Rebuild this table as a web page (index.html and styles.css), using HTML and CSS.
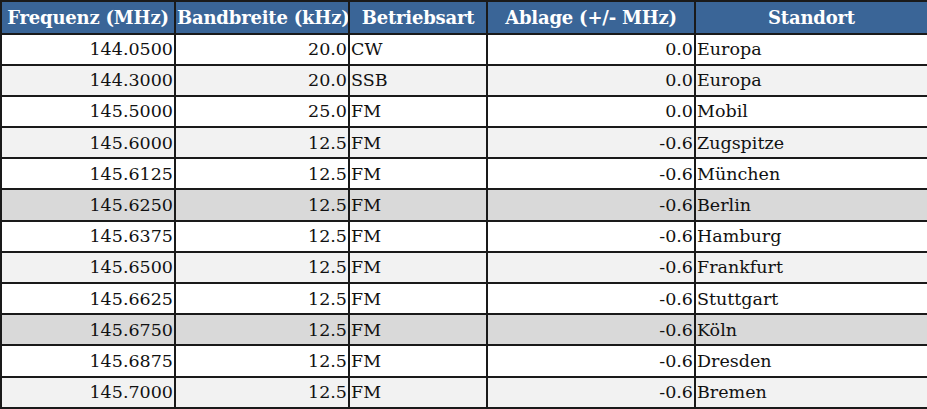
FILE: index.html
```html
<!DOCTYPE html>
<html lang="de">
<head>
<meta charset="utf-8">
<title>Frequenzen</title>
<link rel="stylesheet" href="styles.css">
</head>
<body>
<table class="freq">
<colgroup>
<col class="c1"><col class="c2"><col class="c3"><col class="c4"><col class="c5">
</colgroup>
<thead>
<tr><th>Frequenz (MHz)</th><th>Bandbreite (kHz)</th><th>Betriebsart</th><th>Ablage (+/- MHz)</th><th>Standort</th></tr>
</thead>
<tbody>
<tr class="w"><td class="num">144.0500</td><td class="num">20.0</td><td>CW</td><td class="num">0.0</td><td>Europa</td></tr>
<tr class="l"><td class="num">144.3000</td><td class="num">20.0</td><td>SSB</td><td class="num">0.0</td><td>Europa</td></tr>
<tr class="w"><td class="num">145.5000</td><td class="num">25.0</td><td>FM</td><td class="num">0.0</td><td>Mobil</td></tr>
<tr class="l"><td class="num">145.6000</td><td class="num">12.5</td><td>FM</td><td class="num">-0.6</td><td>Zugspitze</td></tr>
<tr class="w"><td class="num">145.6125</td><td class="num">12.5</td><td>FM</td><td class="num">-0.6</td><td>München</td></tr>
<tr class="d"><td class="num">145.6250</td><td class="num">12.5</td><td>FM</td><td class="num">-0.6</td><td>Berlin</td></tr>
<tr class="w"><td class="num">145.6375</td><td class="num">12.5</td><td>FM</td><td class="num">-0.6</td><td>Hamburg</td></tr>
<tr class="l"><td class="num">145.6500</td><td class="num">12.5</td><td>FM</td><td class="num">-0.6</td><td>Frankfurt</td></tr>
<tr class="w"><td class="num">145.6625</td><td class="num">12.5</td><td>FM</td><td class="num">-0.6</td><td>Stuttgart</td></tr>
<tr class="d"><td class="num">145.6750</td><td class="num">12.5</td><td>FM</td><td class="num">-0.6</td><td>Köln</td></tr>
<tr class="w"><td class="num">145.6875</td><td class="num">12.5</td><td>FM</td><td class="num">-0.6</td><td>Dresden</td></tr>
<tr class="l"><td class="num">145.7000</td><td class="num">12.5</td><td>FM</td><td class="num">-0.6</td><td>Bremen</td></tr>
</tbody>
</table>
</body>
</html>
```
FILE: styles.css
```css
html, body {
  margin: 0;
  padding: 0;
  background: #ffffff;
}
.freq {
  border-collapse: collapse;
  table-layout: fixed;
  width: 927px;
  font-family: "DejaVu Serif", "Liberation Serif", serif;
  font-size: 17.5px;
  color: #111;
}
.c1 { width: 174px; }
.c2 { width: 174px; }
.c3 { width: 138px; }
.c4 { width: 208px; }
.c5 { width: 233px; }
.freq th, .freq td {
  border: 2px solid #1a1a1a;
  height: 29.2px;
  padding: 0 1px;
  white-space: nowrap;
  overflow: hidden;
}
.freq th {
  background: #3a6597;
  color: #ffffff;
  font-weight: bold;
  font-size: 18px;
  letter-spacing: -0.2px;
  text-align: center;
  height: 30.5px;
}
.freq td { text-align: left; }
.freq td.num { text-align: right; }
.w td { background: #ffffff; }
.l td { background: #f2f2f2; }
.d td { background: #d9d9d9; }
```
